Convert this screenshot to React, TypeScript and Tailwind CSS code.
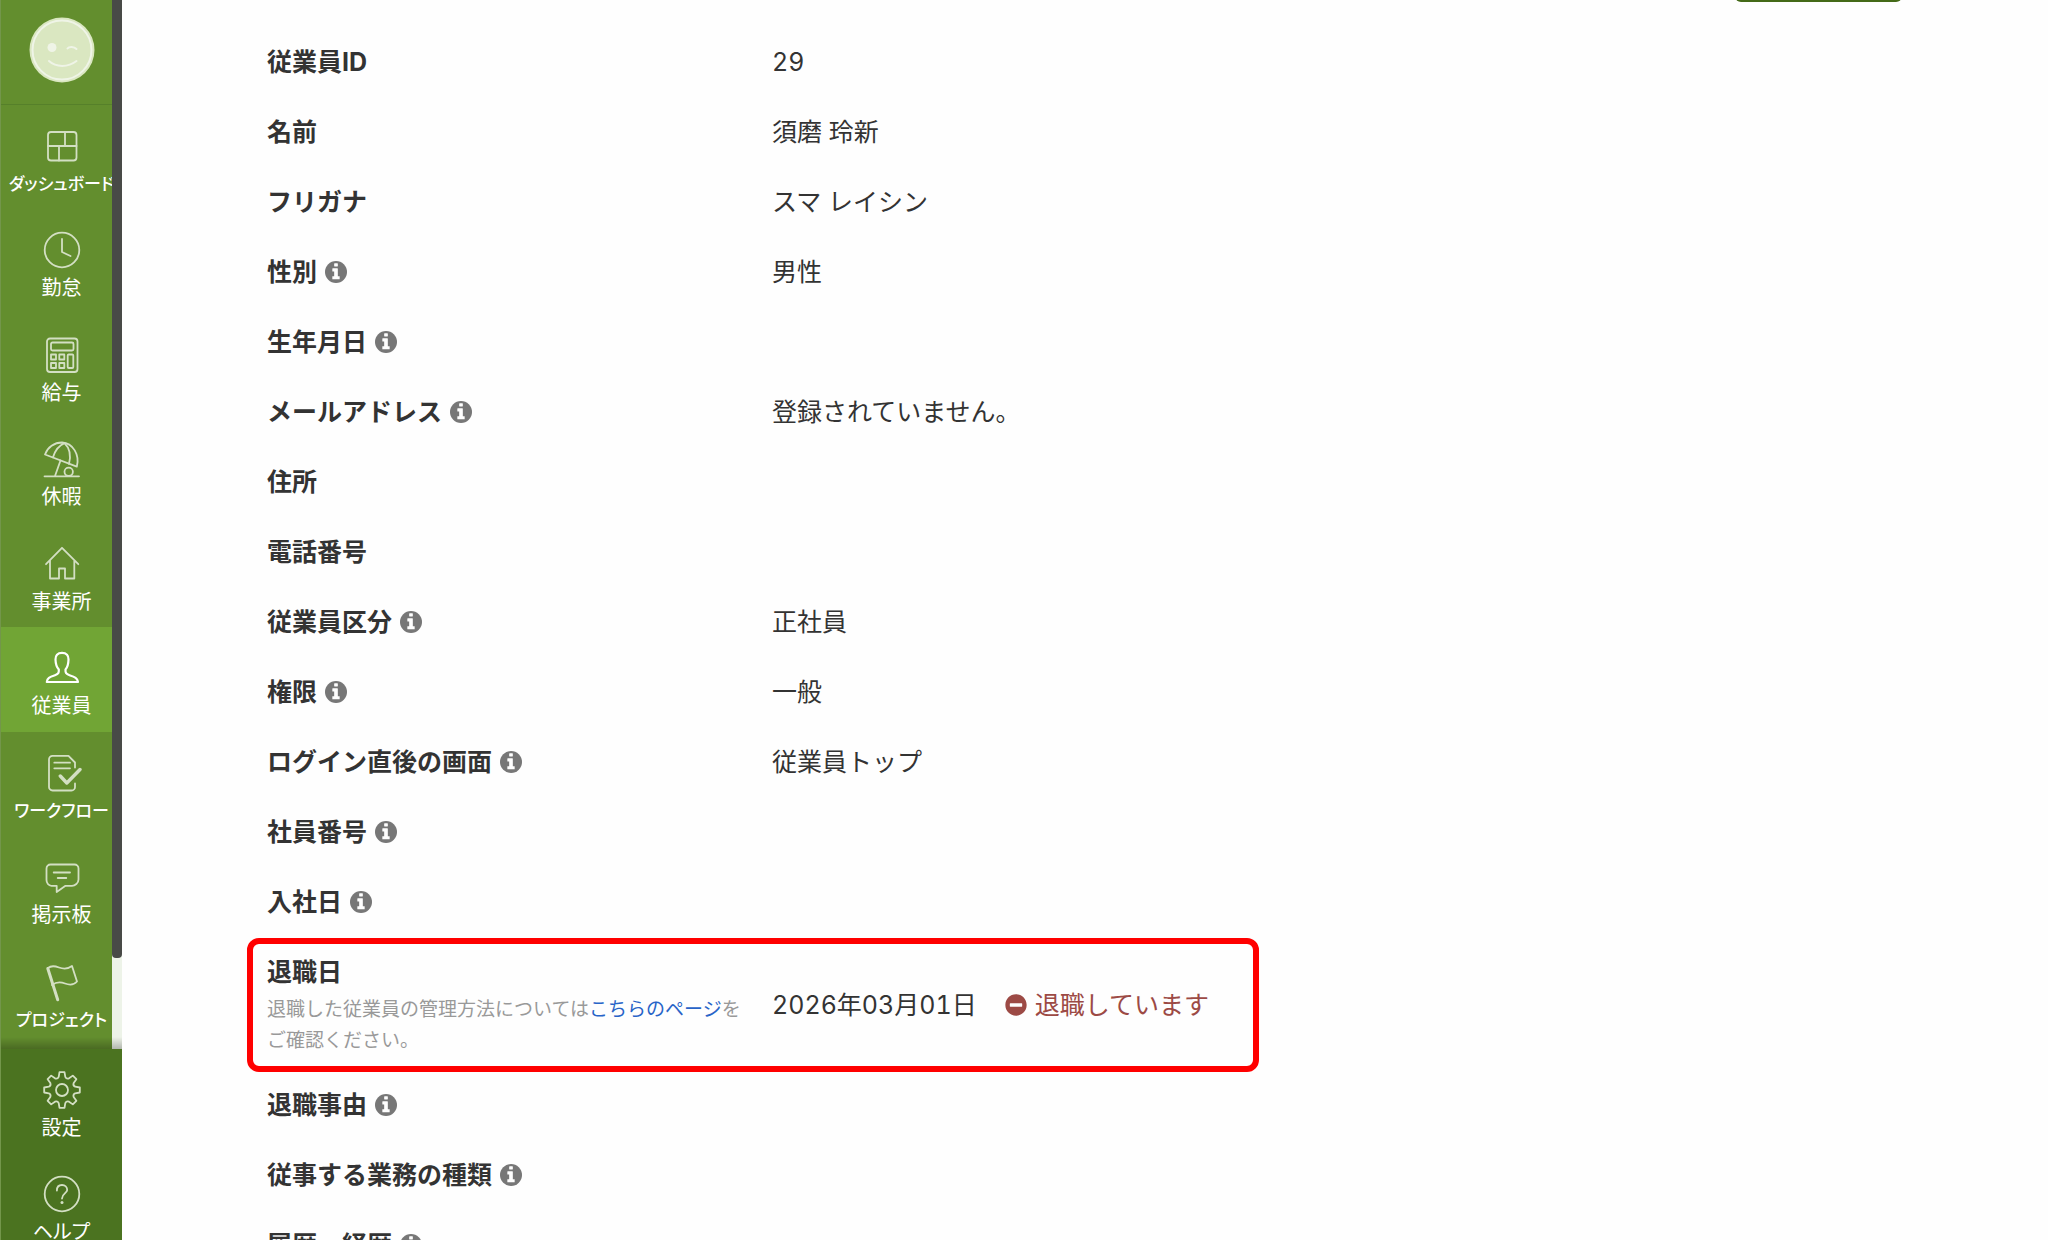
import type { ReactNode } from "react";
import { FaMinusCircle } from "react-icons/fa";

const gearPath = (() => {
  const points: string[] = [];
  const at = (r: number, deg: number) => {
    const a = (deg * Math.PI) / 180;
    return `${(20 + r * Math.sin(a)).toFixed(2)} ${(20 - r * Math.cos(a)).toFixed(2)}`;
  };
  for (let i = 0; i < 8; i++) {
    const c = i * 45;
    points.push(`${i === 0 ? "M" : "L"}${at(13.6, c - 14)}`);
    points.push(`L${at(18, c - 8)}`);
    points.push(`L${at(18, c + 8)}`);
    points.push(`L${at(13.6, c + 14)}`);
    points.push(`Q${at(11.6, c + 22.5)} ${at(13.6, c + 31)}`);
  }
  return points.join(" ") + "Z";
})();

const icons: Record<string, ReactNode> = {
  dashboard: (
    <>
      <rect x="6" y="6" width="28.5" height="28.5" rx="3" />
      <path d="M6 20h28.5M23 6v14M17 20v14.5" />
    </>
  ),
  clock: (
    <>
      <circle cx="20" cy="20" r="17.3" />
      <path d="M20 9v13l8.5 4" />
    </>
  ),
  calculator: (
    <>
      <rect x="5" y="3.5" width="30.5" height="33.5" rx="3" />
      <rect x="9" y="7.5" width="22.5" height="8" rx="1.5" />
      <rect x="9" y="19.5" width="5" height="5" />
      <rect x="17.3" y="19.5" width="5" height="5" />
      <rect x="9" y="28" width="5" height="5" />
      <rect x="17.3" y="28" width="5" height="5" />
      <rect x="25.7" y="19.5" width="5.6" height="13.5" rx="1" />
    </>
  ),
  umbrella: (
    <>
      <path d="M3 15.5A18 18 0 0 1 20 3.5C31 4 38 16 34.8 27.7Z" />
      <path d="M11 18.3C13 12 17 6.5 22.5 4.2M27 24.9C29 17 27.5 9 22.5 4.2M18.5 21.5L13 37M2.5 37.3H37" />
      <circle cx="26.7" cy="32.8" r="4.2" />
    </>
  ),
  house: (
    <path d="M4 20.2L20 3.8L36.3 20.2M8 16.5V34.5H17V24.5H23V34.5H32.3V16.5" />
  ),
  person: (
    <path d="M20 4.8C15.5 4.8 13.3 7.5 13.5 11.5C13.6 16 14.5 19 16.8 21.5C17 25 16.5 26 13 27.2C7.5 29 5 30 4.8 34H36C35.5 30 33 29 27.5 27.2C24 26 23.3 25 23.5 21.5C25.7 19 26.4 16 26.5 11.5C26.7 7.5 24.5 4.8 20 4.8Z" />
  ),
  workflow: (
    <>
      <path d="M33 14.5V9.5L26.5 2.8H10.5a3.5 3.5 0 0 0-3.5 3.5V34a3.5 3.5 0 0 0 3.5 3.5H29.5a3.5 3.5 0 0 0 3.5-3.5V30.5" />
      <path d="M12.3 9.7H28M12.3 15.3H28" />
      <path d="M18.3 23L24.8 30L38 16.5" strokeWidth="3.4" />
    </>
  ),
  board: (
    <>
      <path d="M9 7.5H32.5a4 4 0 0 1 4 4V22.5C36.5 26 33 28.8 30 28.8H23.5L14.7 35V28.8H9.5C6.5 28.8 4.5 26 4.5 23V11.5a4 4 0 0 1 4-4Z" />
      <path d="M11.7 15.5H28M15.7 21H24.3" />
    </>
  ),
  flag: (
    <>
      <path d="M6 6C9 3.5 13 4 17 5.5S26 7 30 4L35 19.5C31.5 23.5 27 23 23 21.5S14 20 10 23" />
      <path d="M5.8 6.5L15.7 37.8" strokeWidth="3" />
    </>
  ),
  gear: (
    <>
      <path d={gearPath} />
      <circle cx="20" cy="20" r="6" />
    </>
  ),
  help: (
    <>
      <circle cx="20" cy="20" r="17.3" />
      <path d="M14.9 16.5C14.9 13 17 11 20 11S25.2 13 25.2 16S20 19.5 20 24.5" />
      <circle cx="20" cy="28.6" r="1.5" fill="currentColor" stroke="none" />
    </>
  ),
};

function InfoIcon() {
  return (
    <svg aria-hidden="true" viewBox="128 128 1536 1536" className="size-[22px] shrink-0">
      <circle cx="896" cy="896" r="768" className="fill-[#777]" />
      <path
        className="fill-[#fefefe]"
        d="M1152 1376v-160q0-14-9-23t-23-9h-96v-512q0-14-9-23t-23-9h-320q-14 0-23 9t-9 23v160q0 14 9 23t23 9h96v320h-96q-14 0-23 9t-9 23v160q0 14 9 23t23 9h448q14 0 23-9t9-23zM1024 480v-160q0-14-9-23t-23-9h-192q-14 0-23 9t-9 23v160q0 14 9 23t23 9h192q14 0 23-9t9-23z"
      />
    </svg>
  );
}

type NavItemProps = { icon: string; label: string; active?: boolean; small?: boolean };

function NavItem({ icon, label, active = false, small = false }: NavItemProps) {
  return (
    <a
      href="#"
      aria-current={active ? "page" : undefined}
      className={
        "flex min-h-0 flex-col items-center pt-[21px] " +
        (active ? "bg-[#71a535] text-white" : "text-[#d3dfc3]")
      }
    >
      <svg
        aria-hidden="true"
        viewBox="0 0 40 40"
        className="size-10 shrink-0 fill-none stroke-current"
        strokeWidth={active ? 2.2 : 1.8}
        strokeLinecap="round"
        strokeLinejoin="round"
      >
        {icons[icon]}
      </svg>
      <span
        className={
          "mt-1 leading-7 whitespace-nowrap text-white [font-feature-settings:'palt'] " +
          (small ? "text-[17px] font-medium" : "text-[20px]")
        }
      >
        {label}
      </span>
    </a>
  );
}

function Sidebar() {
  return (
    <aside className="flex w-[122px] shrink-0 flex-col border-l border-[#73964b] bg-[#638e2e]">
      <div className="relative flex min-h-0 flex-1 flex-col overflow-hidden pb-1">
        <a href="#" aria-label="アカウント" className="flex h-[105px] shrink-0 items-start justify-center border-b border-[#56802a] pt-[17px]">
          <svg aria-hidden="true" viewBox="0 0 66 66" className="size-[66px] fill-none stroke-[#eff4e7]" strokeLinecap="round">
            <circle cx="33" cy="33" r="32.5" fill="#dae7c1" stroke="none" />
            <circle cx="33" cy="33" r="29.5" strokeWidth="2" />
            <circle cx="23" cy="30.5" r="4.5" fill="#eff4e7" stroke="none" />
            <path d="M38.5 31.5C40 29.3 45 29.3 47.5 32M20 44C27 50.5 39 50.5 47.5 44" strokeWidth="2" />
          </svg>
        </a>
        <nav aria-label="メインメニュー" className="grid min-h-0 flex-1 auto-rows-fr grid-cols-1">
          <NavItem icon="dashboard" label="ダッシュボード" small />
          <NavItem icon="clock" label="勤怠" />
          <NavItem icon="calculator" label="給与" />
          <NavItem icon="umbrella" label="休暇" />
          <NavItem icon="house" label="事業所" />
          <NavItem icon="person" label="従業員" active />
          <NavItem icon="workflow" label="ワークフロー" small />
          <NavItem icon="board" label="掲示板" />
          <NavItem icon="flag" label="プロジェクト" small />
        </nav>
        <div className="absolute inset-y-0 right-0 w-2.5 bg-[#edf3e8]">
          <div className="h-[958px] rounded-b-[4px] bg-[#484a47]" />
        </div>
        <div className="absolute inset-x-0 bottom-0 h-3 bg-linear-to-b from-transparent to-black/25" />
      </div>
      <nav aria-label="サブメニュー" className="grid h-[191px] shrink-0 grid-cols-1 grid-rows-[104px_104px] overflow-hidden bg-[#4b7320]">
        <NavItem icon="gear" label="設定" />
        <NavItem icon="help" label="ヘルプ" />
      </nav>
    </aside>
  );
}

type RowData = { label: string; value?: string; info?: boolean };

function Row({ label, value, info }: RowData) {
  return (
    <div className="flex h-[70px] items-center pl-5">
      <dt className="flex w-[505px] shrink-0 items-center gap-2 font-bold">
        {label}
        {info && <InfoIcon />}
      </dt>
      <dd>{value}</dd>
    </div>
  );
}

const rowsBefore: RowData[] = [
  { label: "従業員ID", value: "29" },
  { label: "名前", value: "須磨 玲新" },
  { label: "フリガナ", value: "スマ レイシン" },
  { label: "性別", value: "男性", info: true },
  { label: "生年月日", info: true },
  { label: "メールアドレス", value: "登録されていません。", info: true },
  { label: "住所" },
  { label: "電話番号" },
  { label: "従業員区分", value: "正社員", info: true },
  { label: "権限", value: "一般", info: true },
  { label: "ログイン直後の画面", value: "従業員トップ", info: true },
  { label: "社員番号", info: true },
  { label: "入社日", info: true },
];

const rowsAfter: RowData[] = [
  { label: "退職事由", info: true },
  { label: "従事する業務の種類", info: true },
  { label: "履歴・経歴", info: true },
];

export default function App() {
  return (
    <div
      lang="ja"
      className="flex h-screen overflow-hidden bg-[#fefefe] font-[Inter,'Noto_Sans_CJK_JP',sans-serif] text-[25px] leading-9 text-[#333] tabular-nums"
    >
      <Sidebar />
      <main className="min-w-0 flex-1 overflow-hidden">
        <div className="flex h-0.5 items-end justify-end overflow-hidden pr-[146px]">
          <button type="button" aria-label="編集" className="h-12 w-[167px] shrink-0 rounded-md bg-[#446a18]" />
        </div>
        <dl className="pt-[25px] pl-[125px]">
          {rowsBefore.map((row) => (
            <Row key={row.label} {...row} />
          ))}
          <div className="mt-px -mb-0.5 flex h-[134px] w-[1012px] items-center rounded-xl border-6 border-[#f00] pl-3.5">
            <dt className="w-[505px] shrink-0 pr-5">
              <span className="block font-bold">退職日</span>
              <span className="mt-1 block text-[19px] leading-[31px] text-[#999]">
                退職した従業員の管理方法については
                <a href="#" className="text-[#2864c8]">
                  こちらのページ
                </a>
                をご確認ください。
              </span>
            </dt>
            <dd className="flex items-center">
              2026年03月01日
              <span className="ml-7 flex items-center gap-2 text-[#9c4a45]">
                <FaMinusCircle aria-hidden="true" className="size-[22px]" />
                退職しています
              </span>
            </dd>
          </div>
          {rowsAfter.map((row) => (
            <Row key={row.label} {...row} />
          ))}
        </dl>
      </main>
    </div>
  );
}
